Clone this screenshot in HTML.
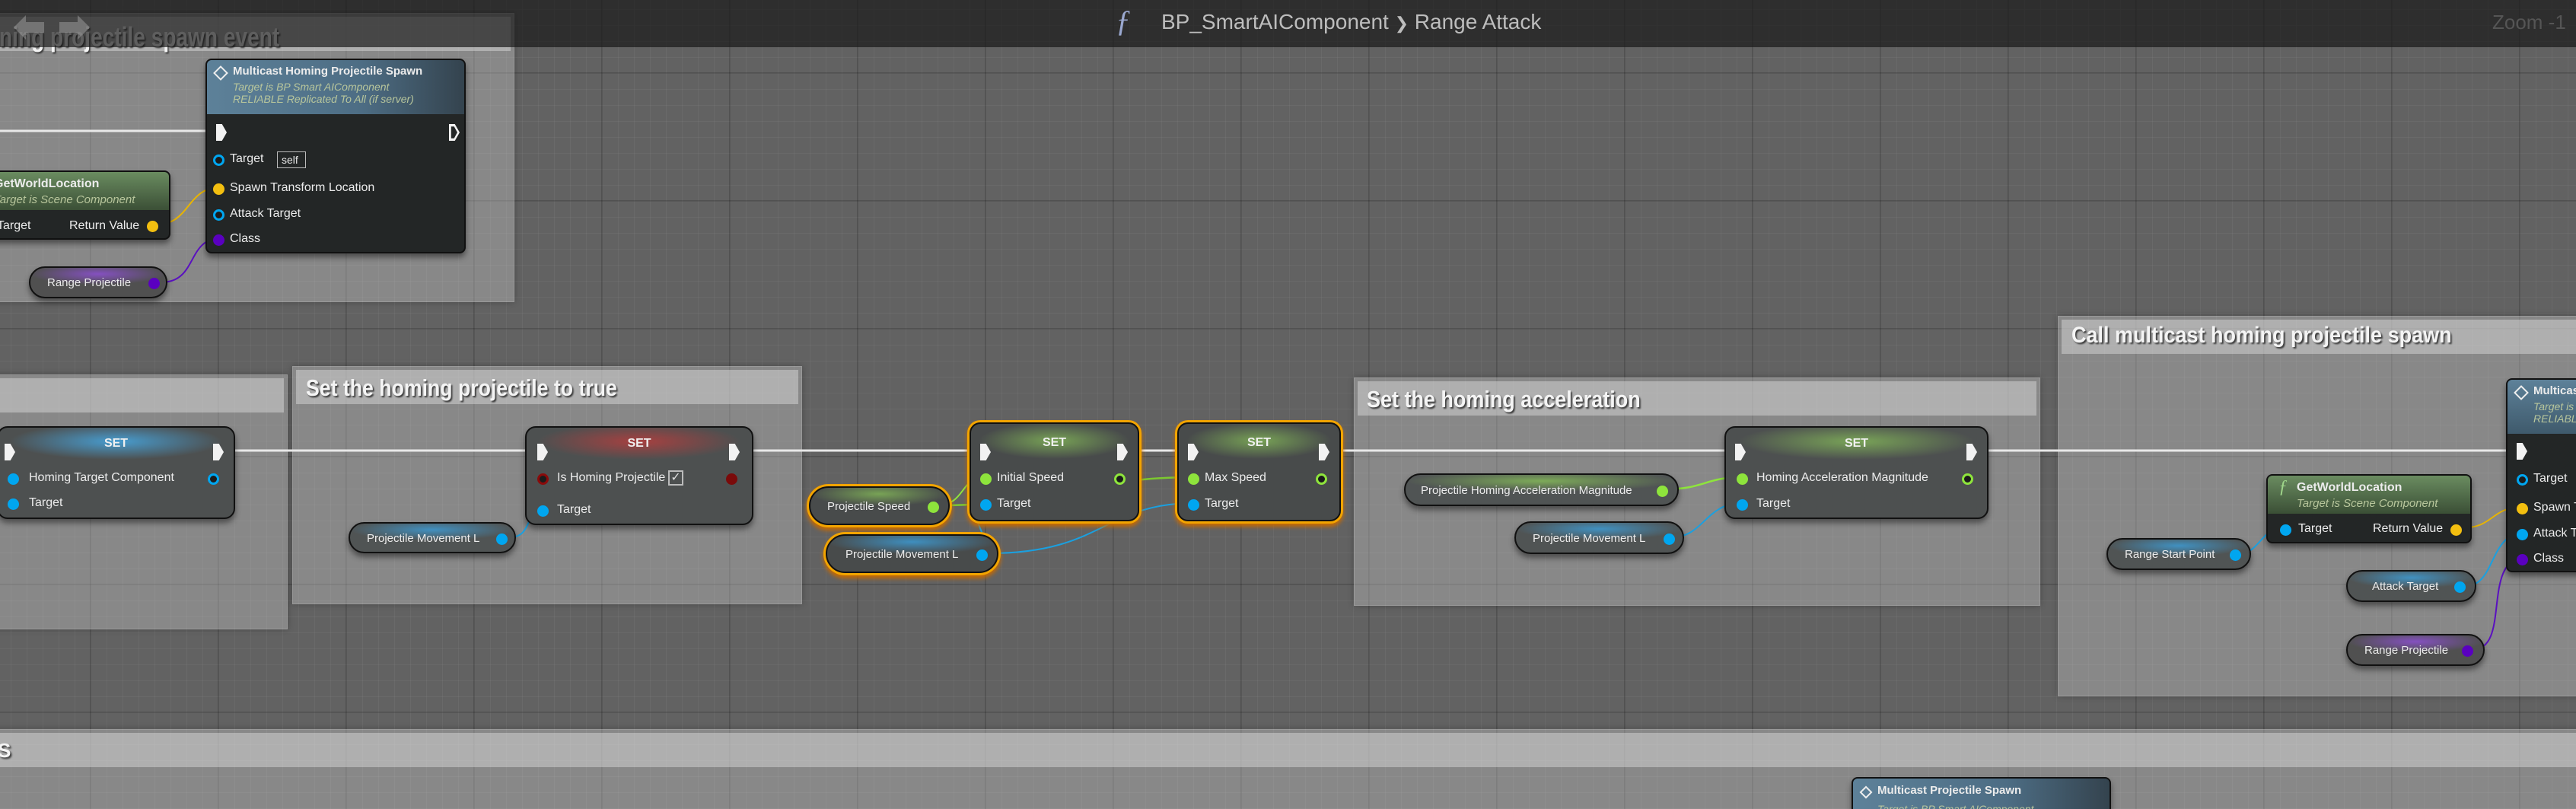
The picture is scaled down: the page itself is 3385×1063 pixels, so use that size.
<!DOCTYPE html>
<html><head><meta charset="utf-8">
<style>
*{margin:0;padding:0;box-sizing:border-box}
html,body{width:3385px;height:1063px;overflow:hidden}
body{position:relative;font-family:"Liberation Sans",sans-serif;color:#e6e6e6;
background-color:#626262;
background-image:
linear-gradient(to right,rgba(0,0,0,.17) 2px,transparent 2px),
linear-gradient(to bottom,rgba(0,0,0,.17) 2px,transparent 2px),
linear-gradient(to right,rgba(255,255,255,.045) 1px,transparent 1px),
linear-gradient(to bottom,rgba(255,255,255,.045) 1px,transparent 1px);
background-size:168px 168px,168px 168px,21px 21px,21px 21px;
background-position:118px 0,0 95px,119px 0,0 96px;}
.abs{position:absolute}
.cmt{position:absolute;background:rgba(215,215,215,.33);border:1px solid rgba(255,255,255,.15);box-shadow:0 0 8px rgba(0,0,0,.25)}
.cmt .hd{position:absolute;left:4px;right:4px;top:4px;height:45px;background:rgba(225,225,225,.45)}
.ttl{position:absolute;font-weight:bold;color:#f4f4f4;text-shadow:2px 2px 2px #3a3a3a;white-space:nowrap;transform-origin:0 0}
.node{position:absolute;border:2px solid #111;box-shadow:0 5px 8px rgba(0,0,0,.45)}
.fn{background:#232626;border-radius:8px}
.set{background:#4d5050;border-radius:14px}
.pill{background:#4f5353;border-radius:22px}
.sel{outline:none;box-shadow:0 0 0 3px #f2a400,0 4px 6px 3px #c86a00}
.lb{position:absolute;font-size:16px;white-space:nowrap;color:#ececec}
.pin{position:absolute;width:15px;height:15px;border-radius:50%}
.ho{background:#1b1b1b;border:3px solid}
.ex{position:absolute;width:14px;height:22px;background:#f2f2f2;clip-path:polygon(0 0,55% 0,100% 50%,55% 100%,0 100%)}
.exo{position:absolute;width:14px;height:22px;background:#f2f2f2;clip-path:polygon(0 0,55% 0,100% 50%,55% 100%,0 100%,0 0,20% 15%,20% 85%,48% 85%,78% 50%,48% 15%,20% 15%)}
.sett{position:absolute;left:0;right:0;top:12px;text-align:center;font-weight:bold;font-size:16px;color:#f0f0f0}
.B{background:#00a6f0}.Y{background:#f3bf10}.P{background:#5a00c0}.G{background:#8ee43c}.R{background:#7a0a0a}
.sub{font-style:italic;color:#b8c69c;font-size:15px}
</style></head><body>

<div class="cmt" style="left:-10px;top:17px;width:686px;height:380px"><div class="hd"></div>
<div class="ttl" style="left:8px;top:10px;font-size:36px;transform:scaleX(.78)">ning projectile spawn event</div></div>
<div class="cmt" style="left:-10px;top:492px;width:388px;height:335px"><div class="hd"></div></div>
<div class="cmt" style="left:384px;top:481px;width:670px;height:313px"><div class="hd"></div>
<div class="ttl" style="left:17px;top:10px;font-size:31px;transform:scaleX(.86)">Set the homing projectile to true</div></div>
<div class="cmt" style="left:1779px;top:496px;width:902px;height:300px"><div class="hd"></div>
<div class="ttl" style="left:16px;top:10px;font-size:31px;transform:scaleX(.87)">Set the homing acceleration</div></div>
<div class="cmt" style="left:2704px;top:415px;width:700px;height:500px"><div class="hd"></div>
<div class="ttl" style="left:17px;top:8px;font-size:30px;transform:scaleX(.9)">Call multicast homing projectile spawn</div></div>
<div class="cmt" style="left:-10px;top:958px;width:3405px;height:120px"><div class="hd" style="top:4px;height:45px"></div>
<div class="ttl" style="left:6px;top:12px;font-size:26px">S</div></div>

<svg class="abs" style="left:0;top:0" width="3385" height="1063" fill="none">
<line x1="0" y1="172" x2="280" y2="172" stroke="#e8e8e8" stroke-width="3"/>
<line x1="0" y1="592" x2="3300" y2="592" stroke="#e8e8e8" stroke-width="3"/>
<path d="M206 295 C250 295 245 246 290 246" stroke="#e8b400" stroke-width="2"/>
<path d="M212 371 C260 371 245 313 290 313" stroke="#5a10c0" stroke-width="2"/>
<path d="M670 706 C700 706 690 670 712 670" stroke="#1aa0e0" stroke-width="2"/>
<path d="M1230 664 C1270 664 1260 627 1295 627" stroke="#8ee43c" stroke-width="2"/>
<path d="M1230 664 C1400 664 1420 627 1570 627" stroke="#7cc830" stroke-width="2.5"/>
<path d="M1295 727 C1300 700 1260 661 1297 661" stroke="#1aa0e0" stroke-width="2"/>
<path d="M1300 727 C1450 727 1450 661 1570 661" stroke="#1aa0e0" stroke-width="2"/>
<path d="M2186 643 C2240 643 2240 627 2290 627" stroke="#8ee43c" stroke-width="2.5"/>
<path d="M2196 706 C2240 706 2240 661 2290 661" stroke="#1aa0e0" stroke-width="2"/>
<path d="M2940 728 C2970 728 2970 694 3000 694" stroke="#1aa0e0" stroke-width="2"/>
<path d="M3232 694 C3280 694 3270 666 3318 666" stroke="#e8b400" stroke-width="2"/>
<path d="M3240 770 C3280 770 3270 700 3318 700" stroke="#1aa0e0" stroke-width="2"/>
<path d="M3250 853 C3300 853 3260 733 3318 733" stroke="#5a10c0" stroke-width="2"/>
</svg>

<div class="node fn" style="left:-48px;top:224px;width:272px;height:91px;overflow:hidden">
<div class="abs" style="left:0;top:0;right:0;height:50px;background:linear-gradient(#6a8c60,#3b4f36)"></div>
<div class="lb" style="left:38px;top:7px;font-weight:bold">GetWorldLocation</div>
<div class="lb sub" style="left:38px;top:28px">Target is Scene Component</div>
<div class="lb" style="left:42px;top:62px">Target</div>
<div class="lb" style="left:137px;top:62px">Return Value</div>
<div class="pin Y" style="left:239px;top:64px"></div>
</div>
<div class="node fn" style="left:270px;top:77px;width:342px;height:256px;overflow:hidden">
<div class="abs" style="left:0;top:0;right:0;height:71px;background:linear-gradient(to right,#5d8199,#4d6d84 60%,#34434e)"></div>
<div class="abs" style="left:11px;top:10px;width:14px;height:14px;border:2px solid #eee;transform:rotate(45deg)"></div>
<div class="lb" style="left:34px;top:6px;font-weight:bold;font-size:15px">Multicast Homing Projectile Spawn</div>
<div class="lb sub" style="left:34px;top:27px;font-size:14px">Target is BP Smart AIComponent</div>
<div class="lb sub" style="left:34px;top:43px;font-size:14px">RELIABLE Replicated To All (if server)</div>
<div class="ex" style="left:12px;top:84px"></div><div class="exo" style="left:318px;top:84px"></div>
<div class="pin ho" style="left:8px;top:124px;border-color:#00a6f0"></div><div class="lb" style="left:30px;top:121px">Target</div>
<div class="abs" style="left:92px;top:120px;width:38px;height:22px;border:1px solid #bbb;font-size:14px;padding-left:5px;line-height:20px">self</div>
<div class="pin Y" style="left:8px;top:162px"></div><div class="lb" style="left:30px;top:159px">Spawn Transform Location</div>
<div class="pin ho" style="left:8px;top:196px;border-color:#00a6f0"></div><div class="lb" style="left:30px;top:193px">Attack Target</div>
<div class="pin P" style="left:8px;top:229px"></div><div class="lb" style="left:30px;top:226px">Class</div>
</div>
<div class="node pill" style="left:38px;top:350px;width:182px;height:42px;background:radial-gradient(ellipse 50% 14px at 50% 8px,rgba(150,80,230,.75),transparent),#505050">
<div class="lb" style="left:22px;top:11px;font-size:15px">Range Projectile</div><div class="pin P" style="left:155px;top:13px"></div></div>

<div class="node set" style="left:-4px;top:560px;width:313px;height:122px;background:radial-gradient(ellipse 45% 24px at 50% 18px,rgba(70,170,230,.85),transparent),#4d5050">
<div class="sett">SET</div>
<div class="ex" style="left:8px;top:21px"></div><div class="ex" style="left:282px;top:21px"></div>
<div class="pin B" style="left:12px;top:60px"></div><div class="lb" style="left:40px;top:57px">Homing Target Component</div>
<div class="pin ho" style="left:275px;top:60px;border-color:#00a6f0"></div>
<div class="pin B" style="left:12px;top:93px"></div><div class="lb" style="left:40px;top:90px">Target</div>
</div>
<div class="node set" style="left:690px;top:560px;width:300px;height:130px;background:radial-gradient(ellipse 45% 24px at 50% 18px,rgba(190,60,60,.8),transparent),#4d5050">
<div class="sett">SET</div>
<div class="ex" style="left:14px;top:21px"></div><div class="ex" style="left:266px;top:21px"></div>
<div class="pin ho" style="left:14px;top:60px;border-color:#8a0a0a"></div><div class="lb" style="left:40px;top:57px">Is Homing Projectile</div>
<div class="abs" style="left:186px;top:56px;width:20px;height:20px;border:2px solid #bbb;color:#ddd;font-size:16px;line-height:16px;text-align:center">✓</div>
<div class="pin R" style="left:262px;top:60px"></div>
<div class="pin B" style="left:14px;top:102px"></div><div class="lb" style="left:40px;top:99px">Target</div>
</div>
<div class="node pill" style="left:458px;top:686px;width:220px;height:41px;background:radial-gradient(ellipse 50% 14px at 50% 8px,rgba(60,160,220,.8),transparent),#505454">
<div class="lb" style="left:22px;top:11px;font-size:15px">Projectile Movement L</div><div class="pin B" style="left:192px;top:13px"></div></div>

<div class="node set sel" style="left:1274px;top:555px;width:223px;height:130px;border-color:#111;background:radial-gradient(ellipse 45% 24px at 50% 22px,rgba(140,200,90,.7),transparent),#484b4b">
<div class="sett" style="top:16px">SET</div>
<div class="ex" style="left:12px;top:26px"></div><div class="ex" style="left:192px;top:26px"></div>
<div class="pin G" style="left:12px;top:65px"></div><div class="lb" style="left:34px;top:62px">Initial Speed</div>
<div class="pin ho" style="left:188px;top:65px;border-color:#8ee43c"></div>
<div class="pin B" style="left:12px;top:99px"></div><div class="lb" style="left:34px;top:96px">Target</div>
</div>
<div class="node set sel" style="left:1547px;top:555px;width:215px;height:130px;background:radial-gradient(ellipse 45% 24px at 50% 22px,rgba(140,200,90,.7),transparent),#484b4b">
<div class="sett" style="top:16px">SET</div>
<div class="ex" style="left:12px;top:26px"></div><div class="ex" style="left:184px;top:26px"></div>
<div class="pin G" style="left:12px;top:65px"></div><div class="lb" style="left:34px;top:62px">Max Speed</div>
<div class="pin ho" style="left:180px;top:65px;border-color:#8ee43c"></div>
<div class="pin B" style="left:12px;top:99px"></div><div class="lb" style="left:34px;top:96px">Target</div>
</div>
<div class="node pill sel" style="left:1063px;top:639px;width:185px;height:51px;border-radius:26px;background:radial-gradient(ellipse 50% 16px at 50% 8px,rgba(140,200,90,.7),transparent),#484b4b">
<div class="lb" style="left:22px;top:16px;font-size:15px">Projectile Speed</div><div class="pin G" style="left:154px;top:18px"></div></div>
<div class="node pill sel" style="left:1085px;top:702px;width:227px;height:51px;border-radius:26px;background:radial-gradient(ellipse 50% 16px at 50% 8px,rgba(60,160,220,.8),transparent),#484b4b">
<div class="lb" style="left:24px;top:16px;font-size:15px">Projectile Movement L</div><div class="pin B" style="left:196px;top:18px"></div></div>

<div class="node pill" style="left:1845px;top:622px;width:361px;height:43px;background:radial-gradient(ellipse 50% 14px at 50% 8px,rgba(140,200,90,.75),transparent),#505454">
<div class="lb" style="left:20px;top:12px;font-size:15px">Projectile Homing Acceleration Magnitude</div><div class="pin G" style="left:330px;top:14px"></div></div>
<div class="node pill" style="left:1990px;top:685px;width:223px;height:43px;background:radial-gradient(ellipse 50% 14px at 50% 8px,rgba(60,160,220,.8),transparent),#505454">
<div class="lb" style="left:22px;top:12px;font-size:15px">Projectile Movement L</div><div class="pin B" style="left:194px;top:14px"></div></div>
<div class="node set" style="left:2266px;top:560px;width:347px;height:122px;background:radial-gradient(ellipse 45% 24px at 50% 18px,rgba(140,200,90,.7),transparent),#4d5050">
<div class="sett">SET</div>
<div class="ex" style="left:12px;top:21px"></div><div class="ex" style="left:316px;top:21px"></div>
<div class="pin G" style="left:14px;top:60px"></div><div class="lb" style="left:40px;top:57px">Homing Acceleration Magnitude</div>
<div class="pin ho" style="left:310px;top:60px;border-color:#8ee43c"></div>
<div class="pin B" style="left:14px;top:94px"></div><div class="lb" style="left:40px;top:91px">Target</div>
</div>

<div class="node pill" style="left:2768px;top:707px;width:190px;height:42px;background:radial-gradient(ellipse 50% 14px at 50% 8px,rgba(60,160,220,.8),transparent),#505454">
<div class="lb" style="left:22px;top:11px;font-size:15px">Range Start Point</div><div class="pin B" style="left:160px;top:13px"></div></div>
<div class="node fn" style="left:2978px;top:623px;width:270px;height:91px;overflow:hidden">
<div class="abs" style="left:0;top:0;right:0;height:50px;background:linear-gradient(#6a8c60,#3b4f36)"></div>
<div class="lb" style="left:14px;top:2px;font-size:24px;font-style:italic;color:#9fd58a;font-family:'Liberation Serif',serif">ƒ</div>
<div class="lb" style="left:38px;top:7px;font-weight:bold">GetWorldLocation</div>
<div class="lb sub" style="left:38px;top:28px">Target is Scene Component</div>
<div class="pin B" style="left:16px;top:64px"></div><div class="lb" style="left:40px;top:61px">Target</div>
<div class="lb" style="left:138px;top:61px">Return Value</div>
<div class="pin Y" style="left:240px;top:64px"></div>
</div>
<div class="node pill" style="left:3083px;top:749px;width:171px;height:42px;background:radial-gradient(ellipse 50% 14px at 50% 8px,rgba(60,160,220,.8),transparent),#505454">
<div class="lb" style="left:32px;top:11px;font-size:15px">Attack Target</div><div class="pin B" style="left:140px;top:13px"></div></div>
<div class="node pill" style="left:3083px;top:833px;width:182px;height:42px;background:radial-gradient(ellipse 50% 14px at 50% 8px,rgba(150,80,230,.75),transparent),#505050">
<div class="lb" style="left:22px;top:11px;font-size:15px">Range Projectile</div><div class="pin P" style="left:150px;top:13px"></div></div>
<div class="node fn" style="left:3293px;top:497px;width:200px;height:255px;overflow:hidden">
<div class="abs" style="left:0;top:0;right:0;height:71px;background:linear-gradient(#5d8199,#3f5a6c)"></div>
<div class="abs" style="left:11px;top:10px;width:14px;height:14px;border:2px solid #eee;transform:rotate(45deg)"></div>
<div class="lb" style="left:34px;top:6px;font-weight:bold;font-size:15px">Multicast Homing Projectile Spawn</div>
<div class="lb sub" style="left:34px;top:27px;font-size:14px">Target is BP Smart AIComponent</div>
<div class="lb sub" style="left:34px;top:43px;font-size:14px">RELIABLE Replicated To All (if server)</div>
<div class="ex" style="left:12px;top:83px"></div>
<div class="pin ho" style="left:12px;top:124px;border-color:#00a6f0"></div><div class="lb" style="left:34px;top:121px">Target</div>
<div class="pin Y" style="left:12px;top:162px"></div><div class="lb" style="left:34px;top:159px">Spawn Transform Location</div>
<div class="pin B" style="left:12px;top:196px"></div><div class="lb" style="left:34px;top:193px">Attack Target</div>
<div class="pin P" style="left:12px;top:229px"></div><div class="lb" style="left:34px;top:226px">Class</div>
</div>

<div class="node fn" style="left:2433px;top:1021px;width:341px;height:80px;overflow:hidden">
<div class="abs" style="left:0;top:0;right:0;height:71px;background:linear-gradient(to right,#5d8199,#4d6d84 60%,#34434e)"></div>
<div class="abs" style="left:11px;top:12px;width:12px;height:12px;border:2px solid #eee;transform:rotate(45deg)"></div>
<div class="lb" style="left:32px;top:7px;font-weight:bold;font-size:15px">Multicast Projectile Spawn</div>
<div class="lb sub" style="left:32px;top:32px;font-size:14px">Target is BP Smart AIComponent</div>
</div>

<div class="abs" style="left:0;top:0;width:3385px;height:62px;background:rgba(22,22,22,.68)"></div>
<svg class="abs" style="left:18px;top:12px" width="100" height="50"><path d="M20 4 L4 20 L13 20 L13 44 L27 44 L27 20 L36 20 Z" fill="rgba(170,170,170,.45)" transform="rotate(-90 20 24)"/><path d="M80 4 L96 20 L87 20 L87 44 L73 44 L73 20 L64 20 Z" fill="rgba(170,170,170,.45)" transform="rotate(90 80 24)"/></svg>
<div class="abs" style="left:1466px;top:4px;font-size:40px;font-style:italic;color:#9aa8d0;font-family:'Liberation Serif',serif">ƒ</div>
<div class="abs" style="left:1526px;top:13px;font-size:28px;color:#bdbdbd;white-space:nowrap">BP_SmartAIComponent <span style="font-size:22px">❯</span> Range Attack</div>
<div class="abs" style="left:3275px;top:14px;font-size:26px;color:#555;white-space:nowrap">Zoom -1</div>
</body></html>
